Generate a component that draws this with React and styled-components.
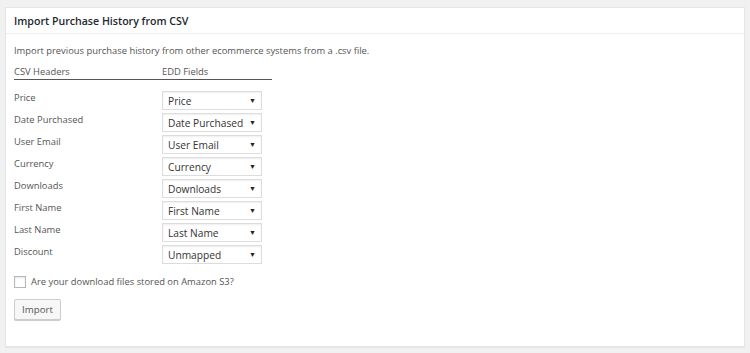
import { Fragment } from 'react'
import styled, { createGlobalStyle } from 'styled-components'

const GlobalStyle = createGlobalStyle`
  * {
    box-sizing: border-box;
  }
  body {
    margin: 0;
    background: #f1f1f1;
    font-family: "Open Sans", "Noto Sans", sans-serif;
    color: #444;
  }
`

const Page = styled.div`
  padding: 7px 5px 6px 5px;
  width: 750px;
  height: 353px;
`

const Box = styled.div`
  background: #fff;
  border: 1px solid #e5e5e5;
  box-shadow: 0 1px 1px rgba(0, 0, 0, 0.04);
  height: 340px;
`

const Title = styled.h2`
  margin: 0;
  padding: 0 8px;
  height: 26px;
  line-height: 26px;
  font-size: 10.6px;
  font-weight: 600;
  color: #23282d;
  border-bottom: 1px solid #eee;
`

const Inside = styled.div`
  padding: 10px 8px 12px;
  font-size: 9.4px;
  color: #555;
`

const Intro = styled.p`
  margin: 0 0 8px;
  line-height: 14px;
`

const Table = styled.div`
  width: 258px;
  display: grid;
  grid-template-columns: 148px 110px;
  align-items: start;
`

const HeadCell = styled.div`
  line-height: 12px;
  padding-bottom: 1px;
  border-bottom: 1px solid #555;
  margin-bottom: 11px;
  color: #555;
`

const Label = styled.div`
  line-height: 13px;
  color: #555;
`

const SelectBox = styled.div`
  width: 100px;
  height: 19px;
  margin-bottom: ${(props) => (props.last ? 0 : '3px')};
  border: 1px solid #ddd;
  box-shadow: inset 0 1px 2px rgba(0, 0, 0, 0.07);
  display: flex;
  align-items: center;
  justify-content: space-between;
  padding: 0 5px 0 5px;
  font-size: 10.2px;
  white-space: nowrap;
  color: #333;
`

const Caret = styled.span`
  font-size: 7px;
  color: #222;
`

const CheckRow = styled.label`
  display: flex;
  align-items: center;
  gap: 5px;
  margin-top: 12px;
  line-height: 12px;
  color: #555;
`

const Check = styled.span`
  width: 12px;
  height: 12px;
  border: 1px solid #b4b9be;
  background: #fff;
  box-shadow: inset 0 1px 2px rgba(0, 0, 0, 0.1);
`

const Button = styled.button`
  display: block;
  margin-top: 11px;
  height: 21px;
  width: 47px;
  padding: 0;
  font-family: inherit;
  font-size: 9.7px;
  color: #555;
  background: #f7f7f7;
  border: 1px solid #ccc;
  border-radius: 2px;
  box-shadow: 0 1px 0 #ccc;
`

const rows = [
  ['Price', 'Price'],
  ['Date Purchased', 'Date Purchased'],
  ['User Email', 'User Email'],
  ['Currency', 'Currency'],
  ['Downloads', 'Downloads'],
  ['First Name', 'First Name'],
  ['Last Name', 'Last Name'],
  ['Discount', 'Unmapped'],
]

function App() {
  return (
    <>
      <GlobalStyle />
      <Page>
        <Box>
          <Title>Import Purchase History from CSV</Title>
          <Inside>
            <Intro>Import previous purchase history from other ecommerce systems from a .csv file.</Intro>
            <Table>
              <HeadCell>CSV Headers</HeadCell>
              <HeadCell>EDD Fields</HeadCell>
              {rows.map(([label, value], i) => (
                <Fragment key={label}>
                  <Label>{label}</Label>
                  <SelectBox last={i === rows.length - 1}>
                    {value}
                    <Caret>▼</Caret>
                  </SelectBox>
                </Fragment>
              ))}
            </Table>
            <CheckRow>
              <Check />
              Are your download files stored on Amazon S3?
            </CheckRow>
            <Button>Import</Button>
          </Inside>
        </Box>
      </Page>
    </>
  )
}

export default App
